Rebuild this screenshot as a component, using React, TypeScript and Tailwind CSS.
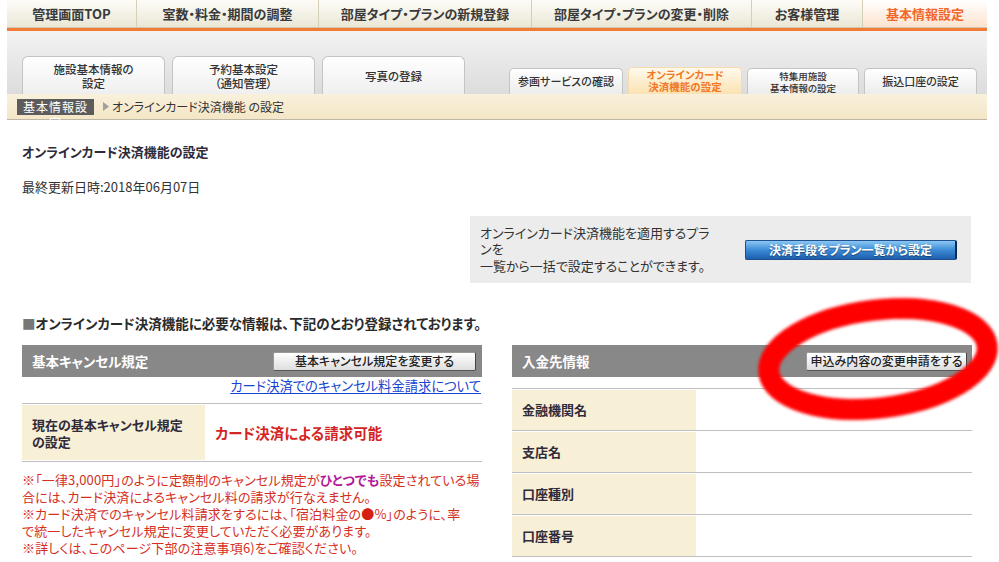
import React from "react";

const navItems = [
  { label: "管理画面TOP", w: "w-[129px]" },
  { label: "室数・料金・期間の調整", w: "w-[182px]" },
  { label: "部屋タイプ・プランの新規登録", w: "w-[213px]" },
  { label: "部屋タイプ・プランの変更・削除", w: "w-[220px]" },
  { label: "お客様管理", w: "w-[111px]" },
];

function GrayButton({ children, w }: { children: React.ReactNode; w: string }) {
  return (
    <div
      className={`${w} h-[19px] flex items-center justify-center rounded-[2px] border border-[#9a9a9a] border-r-[#444] border-b-[#555] bg-gradient-to-b from-[#ffffff] to-[#dedede] text-[12px] leading-none text-[#222] font-medium`}
    >
      {children}
    </div>
  );
}

export default function App() {
  return (
    <div className="relative w-[999px] h-[562px] overflow-hidden bg-white text-[#333] [font-family:'Noto_Sans_CJK_JP',sans-serif] [font-feature-settings:'palt']">
      {/* header block */}
      <div className="ml-[7px] w-[980px]">
        {/* top nav */}
        <div className="flex h-[28px] bg-gradient-to-b from-[#fdfcf8] to-[#ebe7d6] border-b border-[#cfc8b0]">
          {navItems.map((n, i) => (
            <div
              key={i}
              className={`${n.w} flex items-center justify-center text-[13px] font-bold text-[#3a3a3a] ${i > 0 ? "border-l border-[#d6cfb8]" : ""}`}
            >
              {n.label}
            </div>
          ))}
          <div className="w-[125px] flex items-center justify-center text-[13px] font-bold text-[#f2682a] border-l border-[#d6cfb8] bg-gradient-to-b from-[#ffffff] to-[#fde3cf]">
            基本情報設定
          </div>
        </div>
        <div className="h-[3px] bg-[#f27b36]" />
        {/* tabs area */}
        <div className="h-[63px] bg-gradient-to-b from-[#f3f3f3] to-[#dcdcdc] flex items-end pl-[15px]">
          <div className="flex gap-[7px] items-end">
            {[
              ["施設基本情報の", "設定"],
              ["予約基本設定", "（通知管理）"],
              ["写真の登録"],
            ].map((lines, i) => (
              <div
                key={i}
                className="w-[143px] h-[38px] rounded-t-[6px] border border-b-0 border-[#c4c4c4] bg-gradient-to-b from-[#ffffff] to-[#efefef] flex flex-col items-center justify-center text-[11.5px] leading-[14px] font-medium text-[#333]"
              >
                {lines.map((l, j) => (
                  <div key={j}>{l}</div>
                ))}
              </div>
            ))}
          </div>
          <div className="flex gap-[5px] items-end ml-[44px]">
            <div className="w-[114px] h-[26px] rounded-t-[5px] border border-b-0 border-[#c4c4c4] bg-gradient-to-b from-[#ffffff] to-[#ececec] flex items-center justify-center text-[11px] font-medium text-[#333]">
              参画サービスの確認
            </div>
            <div className="w-[114px] h-[27px] rounded-t-[5px] border border-b-0 border-[#f5dcae] bg-gradient-to-b from-[#fff9ec] to-[#fbe2b2] flex flex-col items-center justify-center text-[10.5px] leading-[12.5px] font-bold text-[#f17826]">
              <div>オンラインカード</div>
              <div>決済機能の設定</div>
            </div>
            <div className="w-[112px] h-[26px] rounded-t-[5px] border border-b-0 border-[#c4c4c4] bg-gradient-to-b from-[#ffffff] to-[#ececec] flex flex-col items-center justify-center text-[9.5px] leading-[12px] font-medium text-[#333]">
              <div>特集用施設</div>
              <div>基本情報の設定</div>
            </div>
            <div className="w-[113px] h-[26px] rounded-t-[5px] border border-b-0 border-[#c4c4c4] bg-gradient-to-b from-[#ffffff] to-[#ececec] flex items-center justify-center text-[11px] font-medium text-[#333]">
              振込口座の設定
            </div>
          </div>
        </div>
        {/* breadcrumb */}
        <div className="h-[26px] bg-gradient-to-b from-[#f9f1dc] to-[#f4e6c6] border-b border-[#bdb7a8] flex items-center pl-[10px]">
          <div className="w-[77px] h-[16px] bg-[#5c5c5c] text-white text-[12px] leading-[16px] text-center tracking-[1px]">
            基本情報設定
          </div>
          <svg width="6" height="9" viewBox="0 0 6 9" className="ml-[9px]">
            <path d="M0 0 L6 4.5 L0 9 Z" fill="#a0a0a0" />
          </svg>
          <div className="ml-[3px] text-[12px] text-[#333]">オンラインカード決済機能 の設定</div>
        </div>
      </div>

      {/* content */}
      <div className="pl-[22px] pr-[27px]">
        <div className="mt-[23px] text-[13px] leading-[18px] font-bold text-[#2e2b3a]">
          オンラインカード決済機能の設定
        </div>
        <div className="mt-[17px] text-[13px] leading-[17px] text-[#333]">
          最終更新日時:2018年06月07日
        </div>

        <div className="mt-[21px] ml-[448px] w-[501px] h-[67px] bg-[#ececec] flex items-center pl-[10px]">
          <div className="w-[255px] text-[13px] leading-[16.5px] text-[#333] whitespace-nowrap">
            オンラインカード決済機能を適用するプラ
            <br />
            ンを
            <br />
            一覧から一括で設定することができます。
          </div>
          <div className="ml-[10px] w-[212px] h-[20px] rounded-[2px] border border-[#1f4f8e] border-r-[#0c2a55] border-r-2 bg-gradient-to-b from-[#8ac8f2] via-[#3c8bd6] to-[#1d5fae] flex items-center justify-center text-white text-[12px] font-bold [text-shadow:0_1px_1px_rgba(0,0,0,0.4)]">
            決済手段をプラン一覧から設定
          </div>
        </div>

        <div className="mt-[31px] text-[13.5px] leading-[18px] font-bold text-[#2a2a2a]">
          <span className="text-[#777]">■</span>オンラインカード決済機能に必要な情報は、下記のとおり登録されております。
        </div>

        <div className="mt-[13px] flex gap-[30px]">
          {/* left panel */}
          <div className="w-[460px]">
            <div className="h-[32px] bg-[#888888] flex items-center justify-between pl-[10px] pr-[6px]">
              <div className="text-white text-[13.5px] font-bold">基本キャンセル規定</div>
              <GrayButton w="w-[203px]">基本キャンセル規定を変更する</GrayButton>
            </div>
            <div className="text-right pr-[1px] mt-[1px] text-[13.3px] leading-[16px]">
              <span className="text-[#1744d0] underline underline-offset-2">カード決済でのキャンセル料金請求について</span>
            </div>
            <div className="mt-[9px] border-t border-b border-[#c0c0c0] py-[1px] flex">
              <div className="w-[183px] h-[55px] bg-[#f8efd7] flex items-center pl-[10px] pr-[8px] text-[13px] leading-[17px] font-bold text-[#2e2b3a]">
                <div>
                  現在の基本キャンセル規定
                  <br />
                  の設定
                </div>
              </div>
              <div className="flex items-center pl-[10px] text-[14.5px] font-bold text-[#d42424]">
                カード決済による請求可能
              </div>
            </div>
            <div className="mt-[9px] text-[13px] leading-[17px] text-[#d5301e] whitespace-nowrap tracking-[0.15px]">
              <div>
                ※「一律3,000円」のように定額制のキャンセル規定が
                <span className="text-[#b5179a] font-bold">ひとつでも</span>
                設定されている場
              </div>
              <div>合には、カード決済によるキャンセル料の請求が行なえません。</div>
              <div>
                ※カード決済でのキャンセル料請求をするには、「宿泊料金の<span className="text-[#d42010]">●</span>%」のように、率
              </div>
              <div>で統一したキャンセル規定に変更していただく必要があります。</div>
              <div>※詳しくは、このページ下部の注意事項6)をご確認ください。</div>
            </div>
          </div>

          {/* right panel */}
          <div className="w-[460px]">
            <div className="h-[32px] bg-[#888888] flex items-center justify-between pl-[10px] pr-[5px]">
              <div className="text-white text-[13.5px] font-bold">入金先情報</div>
              <GrayButton w="w-[161px]">申込み内容の変更申請をする</GrayButton>
            </div>
            <div className="mt-[11px] border-t border-[#c0c0c0]">
              {["金融機関名", "支店名", "口座種別", "口座番号"].map((l) => (
                <div key={l} className="pt-[1px] border-b border-[#c0c0c0] flex">
                  <div className="w-[184px] h-[40px] bg-[#f8efd7] flex items-center pl-[10px] text-[13px] font-bold text-[#2e2b3a]">
                    {l}
                  </div>
                </div>
              ))}
            </div>
          </div>
        </div>
      </div>

      {/* red hand-drawn circle annotation */}
      <svg
        className="absolute left-0 top-0 pointer-events-none"
        width="999"
        height="562"
        viewBox="0 0 999 562"
      >
        <defs>
          <filter id="blur" x="-20%" y="-20%" width="140%" height="140%">
            <feGaussianBlur stdDeviation="1.6" />
          </filter>
        </defs>
        <ellipse
          cx="878"
          cy="359"
          rx="110"
          ry="49"
          transform="rotate(-7 878 359)"
          fill="none"
          stroke="#ff0000"
          strokeWidth="21"
          filter="url(#blur)"
        />
      </svg>
    </div>
  );
}
